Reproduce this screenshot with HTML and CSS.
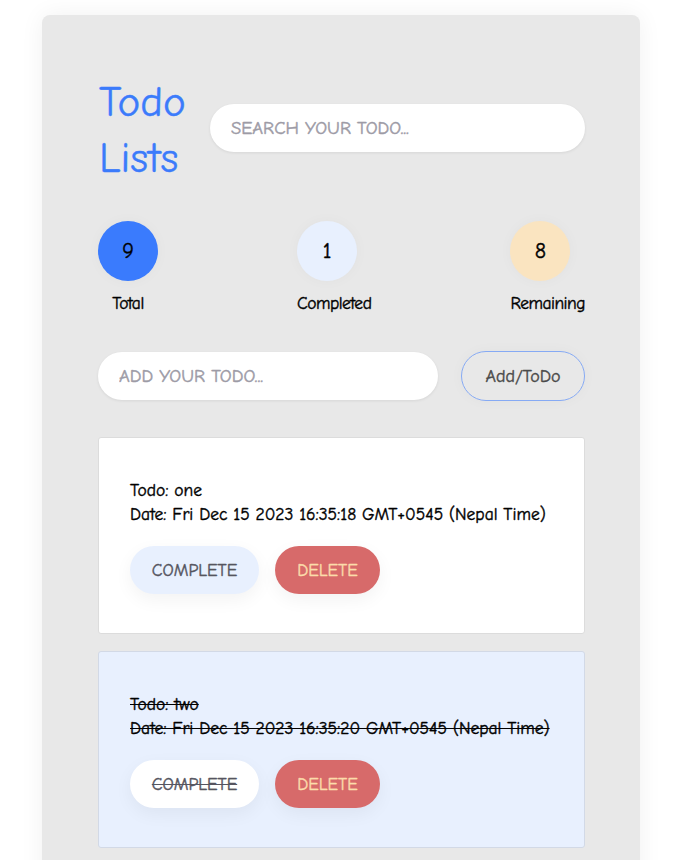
FILE: index.html
```html
<!DOCTYPE html>
<html lang="en">
<head>
<meta charset="utf-8">
<title>Todo Lists</title>
<link rel="stylesheet" href="styles.css">
</head>
<body>
<div class="app">
  <header class="header">
    <h1 class="title">Todo Lists</h1>
    <input class="search" type="text" placeholder="SEARCH YOUR TODO...">
  </header>

  <section class="stats">
    <div class="stat">
      <div class="circle circle-total">9</div>
      <div class="stat-label">Total</div>
    </div>
    <div class="stat">
      <div class="circle circle-done">1</div>
      <div class="stat-label">Completed</div>
    </div>
    <div class="stat">
      <div class="circle circle-left">8</div>
      <div class="stat-label">Remaining</div>
    </div>
  </section>

  <form class="add-row">
    <input class="add-input" type="text" placeholder="ADD YOUR TODO...">
    <button class="add-btn" type="button">Add/ToDo</button>
  </form>

  <ul class="list">
    <li class="card">
      <div class="card-text">
        <div>Todo: one</div>
        <div>Date: Fri Dec 15 2023 16:35:18 GMT+0545 (Nepal Time)</div>
      </div>
      <div class="actions">
        <button class="btn btn-complete" type="button">COMPLETE</button>
        <button class="btn btn-delete" type="button">DELETE</button>
      </div>
    </li>
    <li class="card card-done">
      <div class="card-text">
        <div>Todo: two</div>
        <div>Date: Fri Dec 15 2023 16:35:20 GMT+0545 (Nepal Time)</div>
      </div>
      <div class="actions">
        <button class="btn btn-complete" type="button">COMPLETE</button>
        <button class="btn btn-delete" type="button">DELETE</button>
      </div>
    </li>
  </ul>
</div>
</body>
</html>
```

FILE: styles.css
```css
* { box-sizing: border-box; }

html, body {
  margin: 0;
  padding: 0;
  background: #ffffff;
}

body {
  font-family: "Comic Sans MS", "Comic Neue", "Open Sans", sans-serif;
  font-size: 17.5px;
  -webkit-text-stroke: 0.4px currentColor;
  color: #000;
  padding: 15px 57px 0 42px;
  height: 860px;
  overflow: hidden;
}

.app {
  width: 598px;
  min-height: 900px;
  background: #e8e8e8;
  border-radius: 8px;
  box-shadow: 0 0 24px rgba(0, 0, 0, 0.06);
  padding: 59px 55px 40px 56px;
}

.header {
  display: flex;
  align-items: center;
  gap: 22px;
}

.title {
  margin: 0;
  width: 90px;
  font-weight: normal;
  font-size: 43px;
  line-height: 56px;
  color: #3b7bfb;
  padding-left: 1px;
}

.search {
  flex: 1;
  height: 48px;
  border: none;
  border-radius: 24px;
  background: #fff;
  padding: 0 21px;
  font-family: inherit;
  font-size: 18.5px;
  -webkit-text-stroke: 0.45px #9d9ba6;
  outline: none;
  box-shadow: 0 1px 3px rgba(0, 0, 0, 0.08);
  margin-bottom: 4px;
}

.search::placeholder,
.add-input::placeholder {
  color: #9d9ba6;
}

.stats {
  display: flex;
  justify-content: space-between;
  margin-top: 35px;
}

.stat {
  text-align: center;
}

.circle {
  width: 60px;
  height: 60px;
  border-radius: 50%;
  display: flex;
  align-items: center;
  justify-content: center;
  font-size: 22px;
  box-shadow: 0 0 14px rgba(0, 0, 0, 0.03);
}

.circle-total { background: #3a7bfd; }
.circle-done { background: #e8f0fe; }
.circle-left { background: #fae4c0; }

.stat-label {
  margin-top: 11px;
  line-height: 22px;
  letter-spacing: -0.5px;
}

.add-row {
  display: flex;
  align-items: center;
  gap: 23px;
  margin: 37px 0 0;
}

.add-input {
  flex: 1;
  height: 48px;
  border: none;
  border-radius: 24px;
  background: #fff;
  padding: 0 21px;
  font-family: inherit;
  font-size: 18.5px;
  -webkit-text-stroke: 0.45px #9d9ba6;
  outline: none;
  box-shadow: 0 1px 3px rgba(0, 0, 0, 0.08);
}

.add-btn {
  width: 124px;
  height: 50px;
  border: 1px solid #86aaf4;
  border-radius: 25px;
  background: transparent;
  font-family: inherit;
  font-size: 18px;
  color: #4a4a4a;
  -webkit-text-stroke: 0.4px #4a4a4a;
  box-shadow: 0 0 14px rgba(0, 0, 0, 0.03);
}

.list {
  list-style: none;
  margin: 36px 0 0;
  padding: 0;
  display: flex;
  flex-direction: column;
  gap: 17px;
}

.card {
  background: #fff;
  border: 1px solid #dcdcdc;
  border-radius: 3px;
  padding: 40px 31px 39px 31px;
}

.card-done {
  background: #e8f0fe;
  border-color: #d2d9e6;
}

.card-text {
  line-height: 24px;
}

.card-done .card-text {
  text-decoration: line-through;
}

.actions {
  display: flex;
  gap: 16px;
  margin-top: 20px;
}

.btn {
  height: 48px;
  border: none;
  border-radius: 24px;
  font-family: inherit;
  font-size: 17.5px;
  box-shadow: 0 6px 18px rgba(0, 0, 0, 0.05);
}

.btn-complete {
  width: 129px;
  background: #e8f0fe;
  color: #555560;
  -webkit-text-stroke: 0.4px #555560;
}

.card-done .btn-complete {
  background: #fff;
  text-decoration: line-through;
}

.btn-delete {
  width: 105px;
  background: #d76a6a;
  color: #fbdcaa;
  -webkit-text-stroke: 0.4px #fbdcaa;
}
```
